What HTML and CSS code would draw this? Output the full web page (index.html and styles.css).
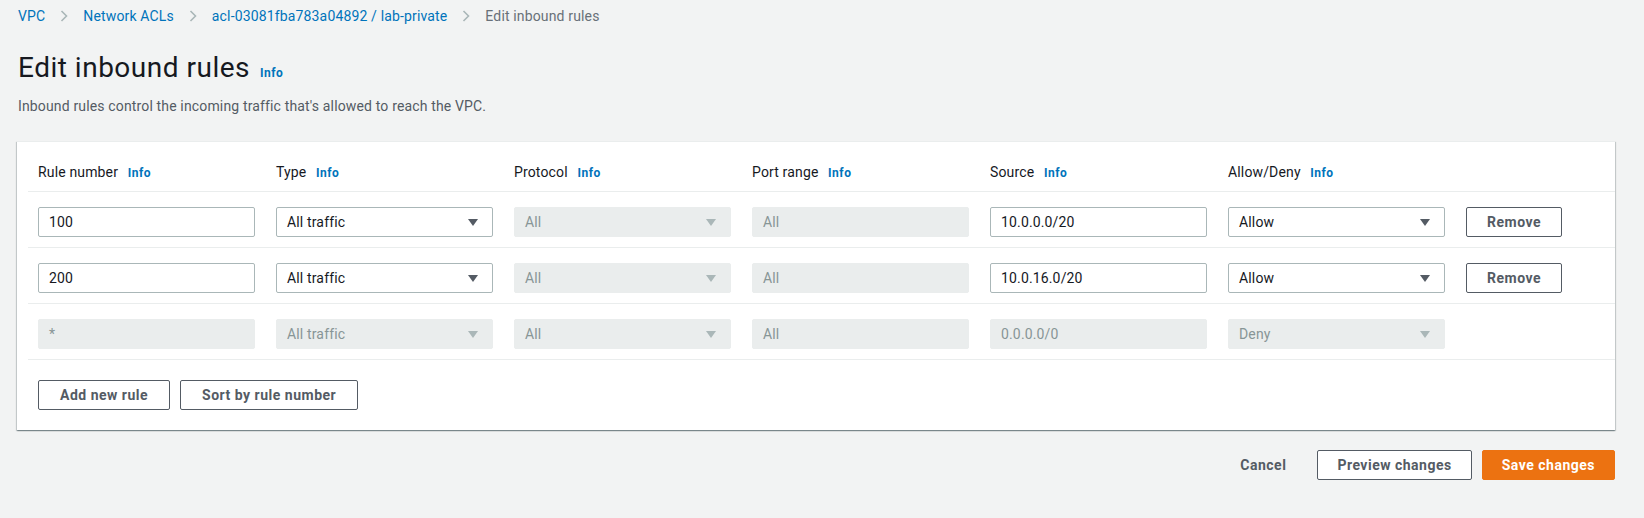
FILE: index.html
```html
<!DOCTYPE html>
<html lang="en">
<head>
<meta charset="utf-8">
<title>Edit inbound rules</title>
<link rel="stylesheet" href="styles.css">
</head>
<body>
<div class="page">
  <nav class="breadcrumbs">
    <a class="crumb">VPC</a>
    <svg class="chev" width="8" height="12" viewBox="0 0 8 12"><path d="M1.5 1l5 5-5 5" fill="none" stroke="#aab7b8" stroke-width="1.6"/></svg>
    <a class="crumb">Network ACLs</a>
    <svg class="chev" width="8" height="12" viewBox="0 0 8 12"><path d="M1.5 1l5 5-5 5" fill="none" stroke="#aab7b8" stroke-width="1.6"/></svg>
    <a class="crumb">acl-03081fba783a04892 / lab-private</a>
    <svg class="chev" width="8" height="12" viewBox="0 0 8 12"><path d="M1.5 1l5 5-5 5" fill="none" stroke="#aab7b8" stroke-width="1.6"/></svg>
    <span class="crumb current">Edit inbound rules</span>
  </nav>

  <div class="title-row">
    <h1 class="title">Edit inbound rules</h1>
    <a class="info">Info</a>
  </div>
  <p class="desc">Inbound rules control the incoming traffic that's allowed to reach the VPC.</p>

  <section class="card">
    <div class="row head">
      <div class="label">Rule number <a class="info">Info</a></div>
      <div class="label">Type <a class="info">Info</a></div>
      <div class="label">Protocol <a class="info">Info</a></div>
      <div class="label">Port range <a class="info">Info</a></div>
      <div class="label">Source <a class="info">Info</a></div>
      <div class="label">Allow/Deny <a class="info">Info</a></div>
    </div>

    <div class="row">
      <div class="field">100</div>
      <div class="field select">All traffic<span class="caret"></span></div>
      <div class="field select disabled">All<span class="caret"></span></div>
      <div class="field disabled">All</div>
      <div class="field">10.0.0.0/20</div>
      <div class="field select">Allow<span class="caret"></span></div>
      <button class="btn">Remove</button>
    </div>

    <div class="row">
      <div class="field">200</div>
      <div class="field select">All traffic<span class="caret"></span></div>
      <div class="field select disabled">All<span class="caret"></span></div>
      <div class="field disabled">All</div>
      <div class="field">10.0.16.0/20</div>
      <div class="field select">Allow<span class="caret"></span></div>
      <button class="btn">Remove</button>
    </div>

    <div class="row">
      <div class="field disabled">*</div>
      <div class="field select disabled">All traffic<span class="caret"></span></div>
      <div class="field select disabled">All<span class="caret"></span></div>
      <div class="field disabled">All</div>
      <div class="field disabled">0.0.0.0/0</div>
      <div class="field select disabled">Deny<span class="caret"></span></div>
    </div>

    <div class="card-foot">
      <button class="btn">Add new rule</button>
      <button class="btn">Sort by rule number</button>
    </div>
  </section>

  <div class="actions">
    <button class="btn link">Cancel</button>
    <button class="btn">Preview changes</button>
    <button class="btn primary">Save changes</button>
  </div>
</div>
</body>
</html>
```

FILE: styles.css
```css
* { box-sizing: border-box; }

body {
  margin: 0;
  background: #f2f3f3;
  font-family: Roboto, "Liberation Sans", sans-serif;
  font-size: 14px;
  letter-spacing: 0.15px;
  color: #16191f;
}

.page {
  padding: 0 29px 0 17px;
}

.breadcrumbs {
  display: flex;
  align-items: center;
  height: 32px;
  padding-left: 1px;
  line-height: 20px;
}

.crumb {
  color: #0073bb;
  text-decoration: none;
}

.crumb.current {
  color: #687078;
}

.chev {
  margin: 0 15px 0 15px;
  flex: none;
}

.title-row {
  display: flex;
  align-items: baseline;
  margin-top: 18px;
  padding-left: 1px;
}

.title {
  margin: 0;
  font-size: 28px;
  line-height: 36px;
  font-weight: 400;
  letter-spacing: 0.5px;
  color: #16191f;
}

.info {
  color: #0073bb;
  font-size: 12px;
  font-weight: 700;
  letter-spacing: 0.5px;
  margin-left: 10px;
}

.desc {
  margin: 10px 0 0 1px;
  line-height: 20px;
  color: #545b64;
}

.card {
  margin-top: 25px;
  background: #fff;
  padding-left: 11px;
  border-top: 1px solid #eaeded;
  box-shadow: 0 1px 1px 0 rgba(0, 28, 36, 0.3), 1px 1px 1px 0 rgba(0, 28, 36, 0.15), -1px 1px 1px 0 rgba(0, 28, 36, 0.15);
}

.row {
  display: grid;
  grid-template-columns: repeat(6, 217px) 96px;
  column-gap: 21px;
  padding: 15px 0 10px 10px;
  border-bottom: 1px solid #eaeded;
}

.row.head {
  padding: 20px 0 8px 10px;
}

.label {
  line-height: 20px;
  color: #16191f;
}

.label .info {
  margin-left: 6px;
}

.field {
  position: relative;
  height: 30px;
  line-height: 28px;
  padding: 0 10px;
  border: 1px solid #aab7b8;
  border-radius: 2px;
  color: #16191f;
  background: #fff;
}

.field.disabled {
  background: #eaeded;
  border-color: #eaeded;
  color: #879596;
}

.caret {
  position: absolute;
  right: 14px;
  top: 11px;
  width: 0;
  height: 0;
  border-left: 5px solid transparent;
  border-right: 5px solid transparent;
  border-top: 7px solid #545b64;
}

.field.disabled .caret {
  border-top-color: #aab7b8;
}

.btn {
  height: 30px;
  padding: 0 19px;
  border: 1px solid #545b64;
  border-radius: 2px;
  background: #fff;
  color: #545b64;
  font-family: inherit;
  font-size: 14px;
  font-weight: 700;
  letter-spacing: 0.5px;
  line-height: 28px;
  cursor: pointer;
}

.card-foot {
  display: flex;
  gap: 10px;
  padding: 20px 0 20px 10px;
}

.card-foot .btn {
  padding: 0 21px;
}

.actions {
  display: flex;
  justify-content: flex-end;
  align-items: center;
  gap: 10px;
  margin-top: 20px;
}

.btn.link {
  border-color: transparent;
  background: transparent;
  padding: 0 20px;
}

.btn.primary {
  background: #ec7211;
  border-color: #ec7211;
  color: #fff;
}
```
